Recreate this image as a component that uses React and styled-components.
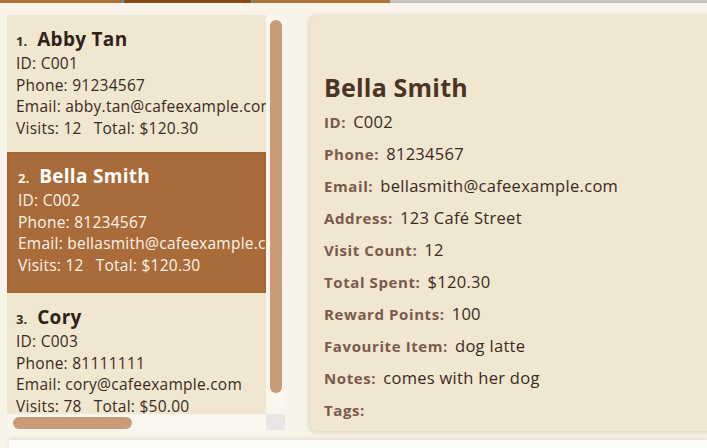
import React from "react";
import styled, { createGlobalStyle } from "styled-components";

const customers = [
  { id: "C001", name: "Abby Tan", phone: "91234567", email: "abby.tan@cafeexample.com", visits: 12, total: "$120.30" },
  { id: "C002", name: "Bella Smith", phone: "81234567", email: "bellasmith@cafeexample.com", visits: 12, total: "$120.30" },
  { id: "C003", name: "Cory", phone: "81111111", email: "cory@cafeexample.com", visits: 78, total: "$50.00" },
];

const details = [
  ["ID:", "C002"],
  ["Phone:", "81234567"],
  ["Email:", "bellasmith@cafeexample.com"],
  ["Address:", "123 Café Street"],
  ["Visit Count:", "12"],
  ["Total Spent:", "$120.30"],
  ["Reward Points:", "100"],
  ["Favourite Item:", "dog latte"],
  ["Notes:", "comes with her dog"],
  ["Tags:", ""],
];

const GlobalStyle = createGlobalStyle`
  html, body {
    margin: 0;
    padding: 0;
    background: #f8f4ea;
    overflow: hidden;
  }
  body {
    font-family: "Open Sans", "Noto Sans", sans-serif;
  }
`;

const Page = styled.div`
  width: 707px;
  height: 448px;
  display: flex;
  flex-direction: column;
  overflow: hidden;
`;

const TabStrip = styled.div`
  display: flex;
  height: 3px;
  flex-shrink: 0;
`;

const Tab = styled.div`
  width: ${(p) => p.$w}px;
  background: ${(p) => p.$color};
  border-right: ${(p) => (p.$mark ? "2px solid #4a9ab8" : "none")};
`;

const TabRest = styled.div`
  flex: 1;
  background: #c8c4c0;
`;

const Main = styled.div`
  display: flex;
  padding: 12px 0 0 7px;
  height: 416px;
  flex-shrink: 0;
`;

const ListPane = styled.div`
  display: grid;
  grid-template-columns: 259px 19px;
  grid-template-rows: 399px 16px;
  width: 278px;
  height: 415px;
`;

const ListViewport = styled.div`
  overflow: hidden;
  background: #f1e6d0;
`;

const Card = styled.div`
  height: ${(p) => (p.$selected ? "141px" : "137px")};
  box-sizing: border-box;
  padding: ${(p) => (p.$selected ? "11px 0 0 11px" : "11px 0 0 9px")};
  background: ${(p) => (p.$selected ? "#a96b39" : "#f1e6d0")};
  box-shadow: ${(p) => (p.$selected ? "inset 0 0 0 2px #a26534" : "none")};
  color: ${(p) => (p.$selected ? "#fbf4ea" : "#3a2a1e")};
  white-space: nowrap;
`;

const NameRow = styled.div`
  display: flex;
  align-items: baseline;
  gap: 10px;
  margin-bottom: 1px;
`;

const Index = styled.span`
  font-size: 13px;
  font-weight: 700;
`;

const Name = styled.span`
  font-size: 19px;
  font-weight: 700;
  letter-spacing: 0.3px;
  color: ${(p) => (p.$selected ? "#ffffff" : "#2f2218")};
`;

const Line = styled.div`
  font-size: 15.5px;
  line-height: 21.6px;
  letter-spacing: 0.25px;
`;

const Gap = styled.span`
  display: inline-block;
  width: 12px;
`;

const VTrack = styled.div`
  background: #faf6ee;
  padding: 5px 3px 0 4px;
`;

const VThumb = styled.div`
  height: 373px;
  border-radius: 6px;
  background: #c99b78;
`;

const HTrack = styled.div`
  background: #faf6ee;
  padding: 3px 0 0 6px;
`;

const HThumb = styled.div`
  width: 119px;
  height: 12px;
  border-radius: 6px;
  background: #c99b78;
`;

const Corner = styled.div`
  background: #e8e7e5;
`;

const DetailPanel = styled.div`
  margin-left: 25px;
  flex: 1;
  min-width: 420px;
  height: 416px;
  box-sizing: border-box;
  padding: 56px 0 0 14px;
  background: #f1e6d0;
  border-radius: 7px 0 0 7px;
  box-shadow: -1px 1px 4px rgba(120, 90, 60, 0.25);
`;

const DetailName = styled.h1`
  margin: 0 0 9px;
  font-size: 25px;
  line-height: 32px;
  font-weight: 700;
  letter-spacing: 0.2px;
  color: #4a3424;
`;

const DetailRow = styled.div`
  display: flex;
  align-items: baseline;
  gap: 7px;
  height: 32px;
  line-height: 20px;
  white-space: nowrap;
`;

const Label = styled.span`
  font-size: 15px;
  font-weight: 700;
  letter-spacing: 0.6px;
  color: #7a5a4c;
`;

const Value = styled.span`
  font-size: 16.5px;
  letter-spacing: 0.3px;
  color: #3a2a1e;
`;

const BottomPanel = styled.div`
  margin: 9px 0 0 9px;
  height: 20px;
  background: #fdfbf7;
  box-shadow: 0 -2px 4px rgba(120, 100, 80, 0.12);
`;

function CustomerCard({ index, customer, selected }) {
  return (
    <Card $selected={selected}>
      <NameRow>
        <Index>{index}.</Index>
        <Name $selected={selected}>{customer.name}</Name>
      </NameRow>
      <Line>ID: {customer.id}</Line>
      <Line>Phone: {customer.phone}</Line>
      <Line>Email: {customer.email}</Line>
      <Line>
        Visits: {customer.visits}
        <Gap />
        Total: {customer.total}
      </Line>
    </Card>
  );
}

export default function App() {
  return (
    <Page>
      <GlobalStyle />
      <TabStrip>
        <Tab $w={122} $color="#b07038" $mark />
        <Tab $w={127} $color="#8b4a14" $mark />
        <Tab $w={137} $color="#b07038" />
        <TabRest />
      </TabStrip>
      <Main>
        <ListPane>
          <ListViewport>
            {customers.map((c, i) => (
              <CustomerCard key={c.id} index={i + 1} customer={c} selected={i === 1} />
            ))}
          </ListViewport>
          <VTrack>
            <VThumb />
          </VTrack>
          <HTrack>
            <HThumb />
          </HTrack>
          <Corner />
        </ListPane>
        <DetailPanel>
          <DetailName>Bella Smith</DetailName>
          {details.map(([label, value]) => (
            <DetailRow key={label}>
              <Label>{label}</Label>
              <Value>{value}</Value>
            </DetailRow>
          ))}
        </DetailPanel>
      </Main>
      <BottomPanel />
    </Page>
  );
}
